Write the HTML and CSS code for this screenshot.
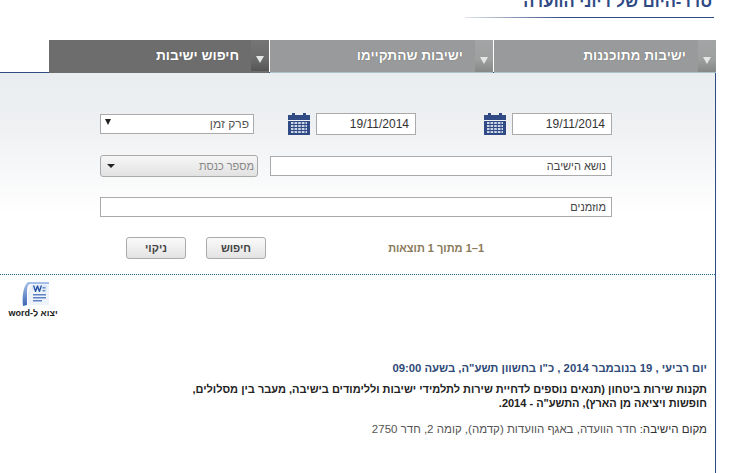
FILE: index.html
```
<!DOCTYPE html>
<html lang="he" dir="rtl">
<head>
<meta charset="utf-8">
<title>חיפוש ישיבות</title>
<link rel="stylesheet" href="styles.css">
</head>
<body>
<div class="page">
  <header class="head">
    <h1 class="title">סדר-היום של דיוני הוועדה</h1>
  </header>
  <nav class="tabs">
    <div class="tab"><span class="tab-arrow"><i class="tri"></i></span><span class="tab-label">ישיבות מתוכננות</span></div>
    <div class="tab tab-mid"><span class="tab-arrow"><i class="tri"></i></span><span class="tab-label">ישיבות שהתקיימו</span></div>
    <div class="tab tab-active"><span class="tab-arrow"><i class="tri"></i></span><span class="tab-label">חיפוש ישיבות</span></div>
  </nav>
  <div class="content">
    <section class="panel">
      <div class="row row-dates">
        <input class="field date" value="19/11/2014" dir="ltr">
        <svg class="cal" width="22" height="22" viewBox="0 0 22 22"><use href="#cal"/></svg>
        <input class="field date date-to" value="19/11/2014" dir="ltr">
        <svg class="cal" width="22" height="22" viewBox="0 0 22 22"><use href="#cal"/></svg>
        <div class="select-plain"><span>פרק זמן</span><i class="caret caret-small"></i></div>
      </div>
      <div class="row row-topic">
        <input class="field topic" value="נושא הישיבה">
        <div class="select-round"><span>מספר כנסת</span><i class="caret"></i></div>
      </div>
      <div class="row row-invited">
        <input class="field invited" value="מוזמנים">
      </div>
      <div class="row row-actions">
        <div class="count">1–1 מתוך 1 תוצאות</div>
        <button class="btn">חיפוש</button>
        <button class="btn">ניקוי</button>
      </div>
    </section>
    <div class="export">
      <svg class="word" width="28" height="26" viewBox="0 0 28 26">
        <defs><linearGradient id="wg" x1="0" y1="0" x2="0" y2="1"><stop offset="0" stop-color="#a9c2ea"/><stop offset="1" stop-color="#3c66b4"/></linearGradient></defs>
        <path d="M6 1H27V3H9C6 3 5 6 5 12V24L1 25C0 16 1 5 6 1Z" fill="url(#wg)"/>
        <path d="M6 24C5 14 6 5 10 3H27V24Z" fill="#eef3fa"/>
        <path d="M10 4H25V9H10Z" fill="#dde7f5"/>
        <path d="M11 4.500L13 11H14L15.500 7L17 11H18L20 4.500H18.700L17.500 8.500L16 4.500H15L13.500 8.500L12.300 4.500Z" fill="#1f4fa3"/>
        <rect x="20.500" y="6" width="3" height="1.500" fill="#6f8fc8"/>
        <rect x="20.500" y="9" width="3" height="1.500" fill="#6f8fc8"/>
        <rect x="11" y="13" width="13" height="1.500" fill="#5f84c4"/>
        <rect x="11" y="16" width="13" height="1.500" fill="#5f84c4"/>
        <rect x="11" y="19" width="9" height="1.500" fill="#5f84c4"/>
      </svg>
      <div class="export-label">יצוא ל-word</div>
    </div>
    <article class="meeting">
      <p class="m-date">יום רביעי , 19 בנובמבר 2014 , כ"ו בחשוון תשע"ה, בשעה 09:00</p>
      <p class="m-subject">תקנות שירות ביטחון (תנאים נוספים לדחיית שירות לתלמידי ישיבות וללימודים בישיבה, מעבר בין מסלולים,<br>חופשות ויציאה מן הארץ), התשע"ה - 2014.</p>
      <p class="m-place"><b>מקום הישיבה:</b> חדר הוועדה, באגף הוועדות (קדמה), קומה 2, חדר 2750</p>
    </article>
  </div>
</div>
<svg class="defs" width="0" height="0">
  <symbol id="cal" viewBox="0 0 22 22">
    <rect x="0" y="2" width="22" height="5" fill="#2f4a85"/>
    <rect x="4" y="0" width="3" height="3" fill="#2f4a85"/>
    <rect x="15" y="0" width="3" height="3" fill="#2f4a85"/>
    <rect x="0" y="8" width="22" height="14" fill="#2f4a85"/>
    <path d="M3 10H19M3 13H19M3 16H19M3 19H19" stroke="#cdd5e6" stroke-width="2"/>
    <path d="M6 9V20.500M9.700 9V20.500M13.300 9V20.500M17 9V20.500" stroke="#2f4a85" stroke-width="1"/>
  </symbol>
</svg>
</body>
</html>
```
FILE: styles.css
```
* { box-sizing: border-box; }
html, body { margin: 0; padding: 0; height: 100%; }
body { background: #fff; font-family: "Liberation Sans", Arial, sans-serif; font-size: 12px; color: #333; overflow: hidden; }
.defs { display: block; }
.page { width: 716px; height: 473px; margin-right: 14px; overflow: hidden; }
.head { height: 40px; }
.title { width: 249px; height: 18px; margin: 0 2px 0 0; padding: 1px 2px 0 0; border-bottom: 1px solid #2f4a85; border-image: linear-gradient(to left, #2f4a85, #2f4a85 60%, #e6e8ee) 1; font-size: 16.500px; font-weight: bold; line-height: 0; color: #2f4a85; white-space: nowrap; overflow: hidden; }
.tabs { display: flex; height: 33px; gap: 1px; padding-left: 49px; box-shadow: inset 0 -2px 0 -1px #2f4a85; }
.tab { display: flex; width: 222px; height: 33px; background: #999a9b; border-bottom: 1px solid #a9c3c8; }
.tab-mid { width: 223px; }
.tab-active { width: 220px; background: #6d6d6d; border-bottom: 0; }
.tab-arrow { width: 18px; height: 32px; display: flex; align-items: flex-end; justify-content: center; padding-bottom: 8px; background: linear-gradient(#a3a4a5 0, #9e9f9f 60%, #868787 100%); }
.tab-active .tab-arrow { height: 31px; background: linear-gradient(#757575 0, #6c6c6c 60%, #555 100%); }
.tri { width: 0; height: 0; border-left: 4px solid transparent; border-right: 4px solid transparent; border-top: 7px solid #e4e6e6; }
.tab-label { margin-right: 12px; font-size: 13.700px; font-weight: bold; line-height: 32px; color: #fff; text-shadow: 0 0 1px #555; white-space: nowrap; }
.content { border-right: 1px solid #2f4a85; }
.panel { height: 202px; padding: 40px 103px 0 0; border-bottom: 1px dotted #2d6f90; background: linear-gradient(#e9edf0 0, #eef0f2 25%, #fff 70%); }
.row { display: flex; align-items: center; }
.row-dates { height: 22px; }
.field { display: block; margin: 0; padding: 0 5px; border: 1px solid #aaa; border-radius: 0; background: #fff; font-family: "Liberation Sans", Arial, sans-serif; font-size: 11px; color: #444; text-align: right; outline: 0; }
.date { width: 100px; height: 22px; padding: 0 6px; font-size: 12px; color: #333; }
.cal { margin-right: 6px; flex: none; }
.date-to { margin-right: 68px; }
.select-plain { margin-right: 34px; width: 154px; height: 20px; padding: 0 4px 0 4px; border: 1px solid #aaa; background: #fff; display: flex; justify-content: space-between; align-items: center; color: #555; }
.caret { width: 0; height: 0; border-left: 4px solid transparent; border-right: 4px solid transparent; border-top: 4px solid #222; }
.caret-small { border-left-width: 3px; border-right-width: 3px; border-top-width: 6px; margin-top: -4px; }
.row-topic { margin-top: 20px; height: 22px; }
.topic { width: 342px; height: 20px; }
.select-round { margin-right: 12px; width: 158px; height: 22px; font-size: 11px; padding: 0 3px 0 6px; border: 1px solid #aaa; border-radius: 3px; background: linear-gradient(#f6f6f6, #e2e2e2); display: flex; justify-content: space-between; align-items: center; color: #888; }
.row-invited { margin-top: 20px; height: 20px; }
.invited { width: 512px; height: 20px; }
.row-actions { margin-top: 20px; height: 22px; }
.count { width: 346px; padding-right: 128px; font-size: 11px; font-weight: bold; color: #8a7a5a; white-space: nowrap; }
.btn { width: 60px; height: 22px; margin-left: 20px; padding: 0; border: 1px solid #aaa; border-radius: 3px; background: linear-gradient(#fafafa, #e3e3e3); font-family: "Liberation Sans", Arial, sans-serif; font-size: 11px; font-weight: bold; color: #444; }
.export { width: 66px; margin-right: 649px; padding-top: 6px; display: flex; flex-direction: column; align-items: center; }
.word { margin-right: -5px; display: block; }
.export-label { margin-top: 1px; font-size: 9px; font-weight: bold; color: #222; white-space: nowrap; }
.meeting { height: 160px; padding: 43px 8px 0 0; }
.meeting p { margin: 0; line-height: 14px; white-space: nowrap; }
.m-date { font-size: 11.300px; font-weight: bold; color: #2f4a78; }
.meeting .m-subject { margin-top: 7px; font-size: 11px; font-weight: bold; color: #222; }
.meeting .m-place { margin-top: 12px; font-size: 11.500px; color: #555; }
.m-place b { color: #333; font-weight: normal; }
```
